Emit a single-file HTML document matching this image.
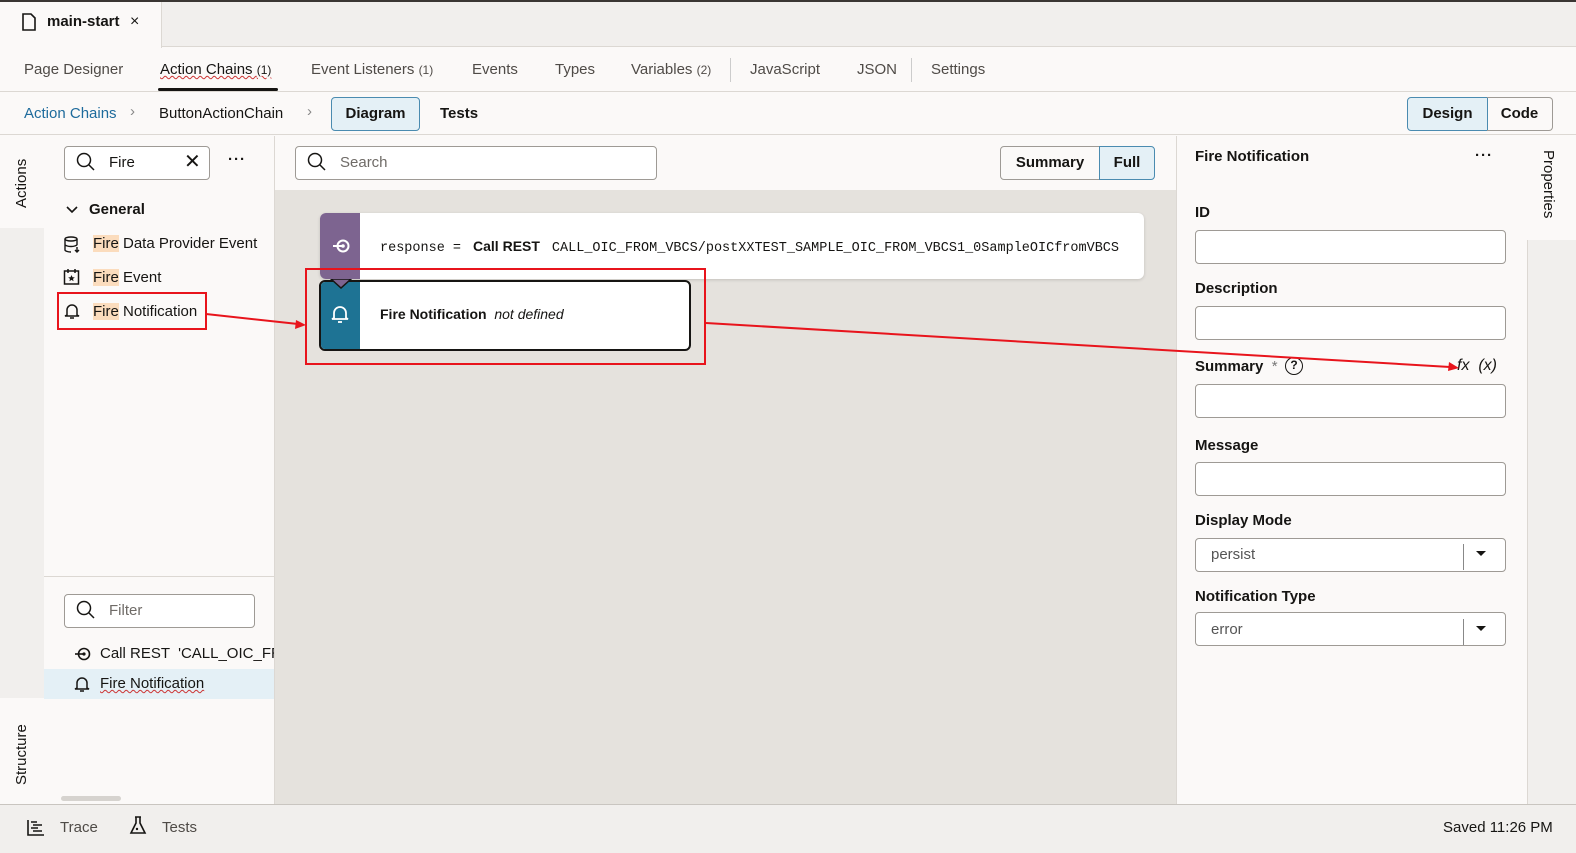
<!DOCTYPE html>
<html><head><meta charset="utf-8"><style>
*{box-sizing:border-box;margin:0;padding:0}
body{width:1576px;height:853px;overflow:hidden;background:#fbf9f8;font-family:"Liberation Sans",sans-serif;color:#161513;position:relative;font-size:15px;line-height:1.3}
.a{position:absolute}
.inp{position:absolute;background:#fff;border:1px solid #9e9a95;border-radius:4px}
.lbl{position:absolute;font-weight:bold;font-size:15px;color:#161513}
.hl{background:#fbdcbd}
</style></head><body>
<div class="a" style="left:0;top:0;width:1576px;height:2px;background:#3a3633"></div>
<div class="a" style="left:0;top:2px;width:1576px;height:45px;background:#f1efed;border-bottom:1px solid #dcd8d3"></div>
<div class="a" style="left:0;top:2px;width:162px;height:46px;background:#fbf9f8;border-right:1px solid #dcd8d3"></div>
<svg class="a" style="left:22px;top:13px" width="14" height="18" viewBox="0 0 14 18"><path d="M1 1h8l4 4v12H1z" fill="none" stroke="#161513" stroke-width="1.6"/></svg>
<div class="a" style="left:47px;top:12px;font-weight:bold;font-size:15px">main-start</div>
<div class="a" style="left:130px;top:12px;font-size:16px">×</div>
<!-- nav -->
<div class="a" style="left:0;top:48px;width:1576px;height:44px;border-bottom:1px solid #dcd8d3"></div>
<div class="a" style="left:24px;top:60px;color:#4f4b47">Page Designer</div>
<div class="a" style="left:160px;top:60px;text-decoration:underline wavy #c33;text-decoration-thickness:1px">Action Chains <span style="font-size:12px;text-decoration:none">(1)</span></div>
<div class="a" style="left:158px;top:88px;width:120px;height:3px;background:#161513;border-radius:2px"></div>
<div class="a" style="left:311px;top:60px;color:#4f4b47">Event Listeners <span style="font-size:12px">(1)</span></div>
<div class="a" style="left:472px;top:60px;color:#4f4b47">Events</div>
<div class="a" style="left:555px;top:60px;color:#4f4b47">Types</div>
<div class="a" style="left:631px;top:60px;color:#4f4b47">Variables <span style="font-size:12px">(2)</span></div>
<div class="a" style="left:730px;top:58px;width:1px;height:24px;background:#ccc"></div>
<div class="a" style="left:750px;top:60px;color:#4f4b47">JavaScript</div>
<div class="a" style="left:857px;top:60px;color:#4f4b47">JSON</div>
<div class="a" style="left:911px;top:58px;width:1px;height:24px;background:#ccc"></div>
<div class="a" style="left:931px;top:60px;color:#4f4b47">Settings</div>
<!-- breadcrumb -->
<div class="a" style="left:0;top:92px;width:1576px;height:43px;border-bottom:1px solid #dcd8d3"></div>
<div class="a" style="left:24px;top:104px;color:#1e6b9c">Action Chains</div>
<div class="a" style="left:130px;top:102px;color:#888">›</div>
<div class="a" style="left:159px;top:104px">ButtonActionChain</div>
<div class="a" style="left:307px;top:102px;color:#888">›</div>
<div class="a" style="left:331px;top:97px;width:89px;height:34px;background:#e4f0f6;border:1px solid #4a8bb0;border-radius:4px;text-align:center;line-height:32px;font-weight:bold">Diagram</div>
<div class="a" style="left:440px;top:104px;font-weight:bold">Tests</div>
<div class="a" style="left:1407px;top:97px;width:81px;height:34px;background:#e4f0f6;border:1px solid #4a8bb0;border-radius:4px 0 0 4px;text-align:center;line-height:32px;font-weight:bold">Design</div>
<div class="a" style="left:1487px;top:97px;width:66px;height:34px;border:1px solid #9e9a95;border-left:none;border-radius:0 4px 4px 0;text-align:center;line-height:32px;font-weight:bold">Code</div>
<!-- left strip -->
<div class="a" style="left:0;top:136px;width:44px;height:668px;background:#f1efed"></div>
<div class="a" style="left:0;top:136px;width:44px;height:92px;background:#fbf9f8"></div>
<div class="a" style="left:0;top:698px;width:44px;height:106px;background:#fbf9f8"></div>
<div class="a" style="left:12px;top:208px;transform:rotate(-90deg);transform-origin:0 0;font-size:15px">Actions</div>
<div class="a" style="left:12px;top:785px;transform:rotate(-90deg);transform-origin:0 0;font-size:15px">Structure</div>
<div class="a" style="left:274px;top:136px;width:1px;height:668px;background:#dcd8d3"></div>
<div class="inp" style="left:64px;top:146px;width:146px;height:34px"></div>
<svg class="a" style="left:76px;top:152px" width="20" height="20"><circle cx="8" cy="8" r="6.5" fill="none" stroke="#161513" stroke-width="1.5"/><path d="M13 13l5 5" stroke="#161513" stroke-width="1.5"/></svg>
<div class="a" style="left:109px;top:153px">Fire</div>
<div class="a" style="left:184px;top:149px;font-size:20px">✕</div>
<div class="a" style="left:228px;top:150px;font-weight:bold;letter-spacing:1px">···</div>
<svg class="a" style="left:66px;top:205px" width="12" height="10"><path d="M1 2l5 5 5-5" fill="none" stroke="#161513" stroke-width="1.6"/></svg>
<div class="a" style="left:89px;top:200px;font-weight:bold">General</div>
<svg class="a" style="left:63px;top:236px" width="18" height="18"><ellipse cx="8" cy="3" rx="6" ry="2" fill="none" stroke="#161513" stroke-width="1.4"/><path d="M2 3v11c0 1 3 2 6 2M14 3v6M2 8.5c0 1 3 2 6 2s6-1 6-2" fill="none" stroke="#161513" stroke-width="1.4"/><path d="M14 11v5M12 14l2 2 2-2" stroke="#161513" stroke-width="1.4" fill="none"/></svg>
<div class="a" style="left:93px;top:234px"><span class="hl">Fire</span> Data Provider Event</div>
<svg class="a" style="left:63px;top:268px" width="18" height="18"><rect x="1.5" y="3" width="14" height="13" fill="none" stroke="#161513" stroke-width="1.5"/><path d="M5 1v4M12 1v4" stroke="#161513" stroke-width="1.5"/><path d="M8.5 7l1 2.2 2.3.2-1.8 1.5.6 2.3-2.1-1.3-2.1 1.3.6-2.3-1.8-1.5 2.3-.2z" fill="#161513"/></svg>
<div class="a" style="left:93px;top:268px"><span class="hl">Fire</span> Event</div>
<svg class="a" style="left:64px;top:302px" width="16" height="18"><path d="M3 13V8a5 5 0 0 1 10 0v5l2 1H1z" fill="none" stroke="#161513" stroke-width="1.5"/><path d="M6 16h4" stroke="#161513" stroke-width="1.5"/></svg>
<div class="a" style="left:93px;top:302px"><span class="hl">Fire</span> Notification</div>
<div class="a" style="left:44px;top:576px;width:230px;height:1px;background:#dcd8d3"></div>
<div class="inp" style="left:64px;top:594px;width:191px;height:34px"></div>
<svg class="a" style="left:76px;top:600px" width="20" height="20"><circle cx="8" cy="8" r="6.5" fill="none" stroke="#161513" stroke-width="1.5"/><path d="M13 13l5 5" stroke="#161513" stroke-width="1.5"/></svg>
<div class="a" style="left:109px;top:601px;color:#6f6b67">Filter</div>
<svg class="a" style="left:74px;top:647px" width="18" height="14"><circle cx="10" cy="7" r="5.5" fill="none" stroke="#161513" stroke-width="1.6"/><circle cx="10" cy="7" r="1.6" fill="#161513"/><path d="M1 7h9" stroke="#161513" stroke-width="1.6"/></svg>
<div class="a" style="left:100px;top:644px;white-space:nowrap;width:174px;overflow:hidden">Call REST &nbsp;'CALL_OIC_FROM</div>
<div class="a" style="left:44px;top:669px;width:230px;height:30px;background:#e4f0f6"></div>
<svg class="a" style="left:74px;top:675px" width="16" height="18"><path d="M3 13V8a5 5 0 0 1 10 0v5l2 1H1z" fill="none" stroke="#161513" stroke-width="1.5"/><path d="M6 16h4" stroke="#161513" stroke-width="1.5"/></svg>
<div class="a" style="left:100px;top:674px;text-decoration:underline wavy #c33;text-decoration-thickness:1px">Fire Notification</div>
<div class="a" style="left:61px;top:796px;width:60px;height:5px;background:#d6d3cf;border-radius:3px"></div>
<!-- canvas -->
<div class="inp" style="left:295px;top:146px;width:362px;height:34px"></div>
<svg class="a" style="left:307px;top:152px" width="20" height="20"><circle cx="8" cy="8" r="6.5" fill="none" stroke="#161513" stroke-width="1.5"/><path d="M13 13l5 5" stroke="#161513" stroke-width="1.5"/></svg>
<div class="a" style="left:340px;top:153px;color:#6f6b67">Search</div>
<div class="a" style="left:1000px;top:146px;width:100px;height:34px;border:1px solid #9e9a95;border-radius:4px 0 0 4px;text-align:center;line-height:32px;font-weight:bold">Summary</div>
<div class="a" style="left:1099px;top:146px;width:56px;height:34px;background:#e4f0f6;border:1px solid #4a8bb0;border-radius:0 4px 4px 0;text-align:center;line-height:32px;font-weight:bold">Full</div>
<div class="a" style="left:275px;top:190px;width:901px;height:614px;background:#e5e2dd"></div>
<div class="a" style="left:320px;top:213px;width:824px;height:66px;background:#fff;border-radius:6px;box-shadow:0 1px 3px rgba(0,0,0,.15)"></div>
<div class="a" style="left:320px;top:213px;width:40px;height:66px;background:#7d6490;border-radius:6px 0 0 6px"></div>
<svg class="a" style="left:331px;top:238px" width="20" height="16"><circle cx="12" cy="8" r="5.5" fill="none" stroke="#fff" stroke-width="2"/><circle cx="12" cy="8" r="1.8" fill="#fff"/><path d="M2 8h10" stroke="#fff" stroke-width="2"/></svg>
<div class="a" style="left:380px;top:237px;font-family:'Liberation Mono',monospace;font-size:13.5px;white-space:nowrap">response = <b style="font-family:'Liberation Sans',sans-serif;font-size:14px">&nbsp;Call REST&nbsp;</b> CALL_OIC_FROM_VBCS/postXXTEST_SAMPLE_OIC_FROM_VBCS1_0SampleOICfromVBCS</div>
<div class="a" style="left:319px;top:280px;width:372px;height:71px;background:#fff;border:2px solid #161513;border-radius:6px;overflow:hidden"><div style="width:39px;height:100%;background:#1e7394"></div></div>
<svg class="a" style="left:330px;top:279px" width="22" height="12"><path d="M1 0l10 9 10-9z" fill="#7d6490" stroke="#161513" stroke-width="1.5"/></svg>
<svg class="a" style="left:331px;top:304px" width="18" height="20"><path d="M3 14V9a6 6 0 0 1 12 0v5l2 1H1z" fill="none" stroke="#fff" stroke-width="1.8"/><path d="M7 18h4" stroke="#fff" stroke-width="1.8"/></svg>
<div class="a" style="left:380px;top:305px;font-size:14px"><b>Fire Notification</b> &nbsp;<i>not defined</i></div>
<!-- right panel -->
<div class="a" style="left:1176px;top:136px;width:1px;height:668px;background:#dcd8d3"></div>
<div class="a" style="left:1527px;top:136px;width:49px;height:668px;background:#f1efed;border-left:1px solid #dcd8d3"></div>
<div class="a" style="left:1527px;top:136px;width:49px;height:104px;background:#fbf9f8"></div>
<div class="a" style="left:1558px;top:150px;transform:rotate(90deg);transform-origin:0 0;font-size:15px">Properties</div>
<div class="lbl" style="left:1195px;top:147px">Fire Notification</div>
<div class="a" style="left:1475px;top:146px;font-weight:bold;letter-spacing:1px">···</div>
<div class="lbl" style="left:1195px;top:203px">ID</div>
<div class="inp" style="left:1195px;top:230px;width:311px;height:34px"></div>
<div class="lbl" style="left:1195px;top:279px">Description</div>
<div class="inp" style="left:1195px;top:306px;width:311px;height:34px"></div>
<div class="lbl" style="left:1195px;top:357px">Summary <span style="color:#777;font-weight:normal">&nbsp;*</span></div>
<div class="a" style="left:1285px;top:357px;width:18px;height:18px;border:1.5px solid #161513;border-radius:50%;text-align:center;font-size:12px;line-height:15px;font-weight:bold">?</div>
<div class="a" style="left:1457px;top:356px;font-style:italic;font-size:16px">fx &nbsp;(x)</div>
<div class="inp" style="left:1195px;top:384px;width:311px;height:34px"></div>
<div class="lbl" style="left:1195px;top:436px">Message</div>
<div class="inp" style="left:1195px;top:462px;width:311px;height:34px"></div>
<div class="lbl" style="left:1195px;top:511px">Display Mode</div>
<div class="inp" style="left:1195px;top:538px;width:311px;height:34px"></div>
<div class="a" style="left:1211px;top:545px;color:#555">persist</div>
<div class="a" style="left:1463px;top:544px;width:1px;height:26px;background:#888"></div>
<div class="a" style="left:1476px;top:551px;border:5px solid transparent;border-top:5px solid #161513"></div>
<div class="lbl" style="left:1195px;top:587px">Notification Type</div>
<div class="inp" style="left:1195px;top:612px;width:311px;height:34px"></div>
<div class="a" style="left:1211px;top:620px;color:#555">error</div>
<div class="a" style="left:1463px;top:619px;width:1px;height:26px;background:#888"></div>
<div class="a" style="left:1476px;top:626px;border:5px solid transparent;border-top:5px solid #161513"></div>
<!-- footer -->
<div class="a" style="left:0;top:804px;width:1576px;height:49px;background:#f1efed;border-top:1px solid #c9c5c0"></div>
<svg class="a" style="left:27px;top:819px" width="18" height="17"><path d="M1 1v15h16M4 3h6M6 6h9M4 9h7M6 12h9" stroke="#161513" stroke-width="1.6" fill="none"/></svg>
<div class="a" style="left:60px;top:818px;color:#4f4b47">Trace</div>
<svg class="a" style="left:129px;top:816px" width="18" height="20"><path d="M6 1h6M7 1v6L2 17h14L11 7V1" fill="none" stroke="#161513" stroke-width="1.6"/><circle cx="8" cy="13" r="1.2" fill="#161513"/></svg>
<div class="a" style="left:162px;top:818px;color:#4f4b47">Tests</div>
<div class="a" style="left:1443px;top:818px">Saved 11:26 PM</div>
<!-- annotations -->
<svg class="a" style="left:0;top:0" width="1576" height="853">
<g fill="none" stroke="#e8141c" stroke-width="2">
<rect x="58" y="293" width="148" height="36"/>
<rect x="306" y="269" width="399" height="95"/>
<path d="M206 314L298 324"/>
<path d="M706 323L1450 367"/>
</g>
<path d="M306 325l-10-5 -1 9z" fill="#e8141c"/>
<path d="M1459 368l-10-6 -1 9z" fill="#e8141c"/>
</svg>
</body></html>
